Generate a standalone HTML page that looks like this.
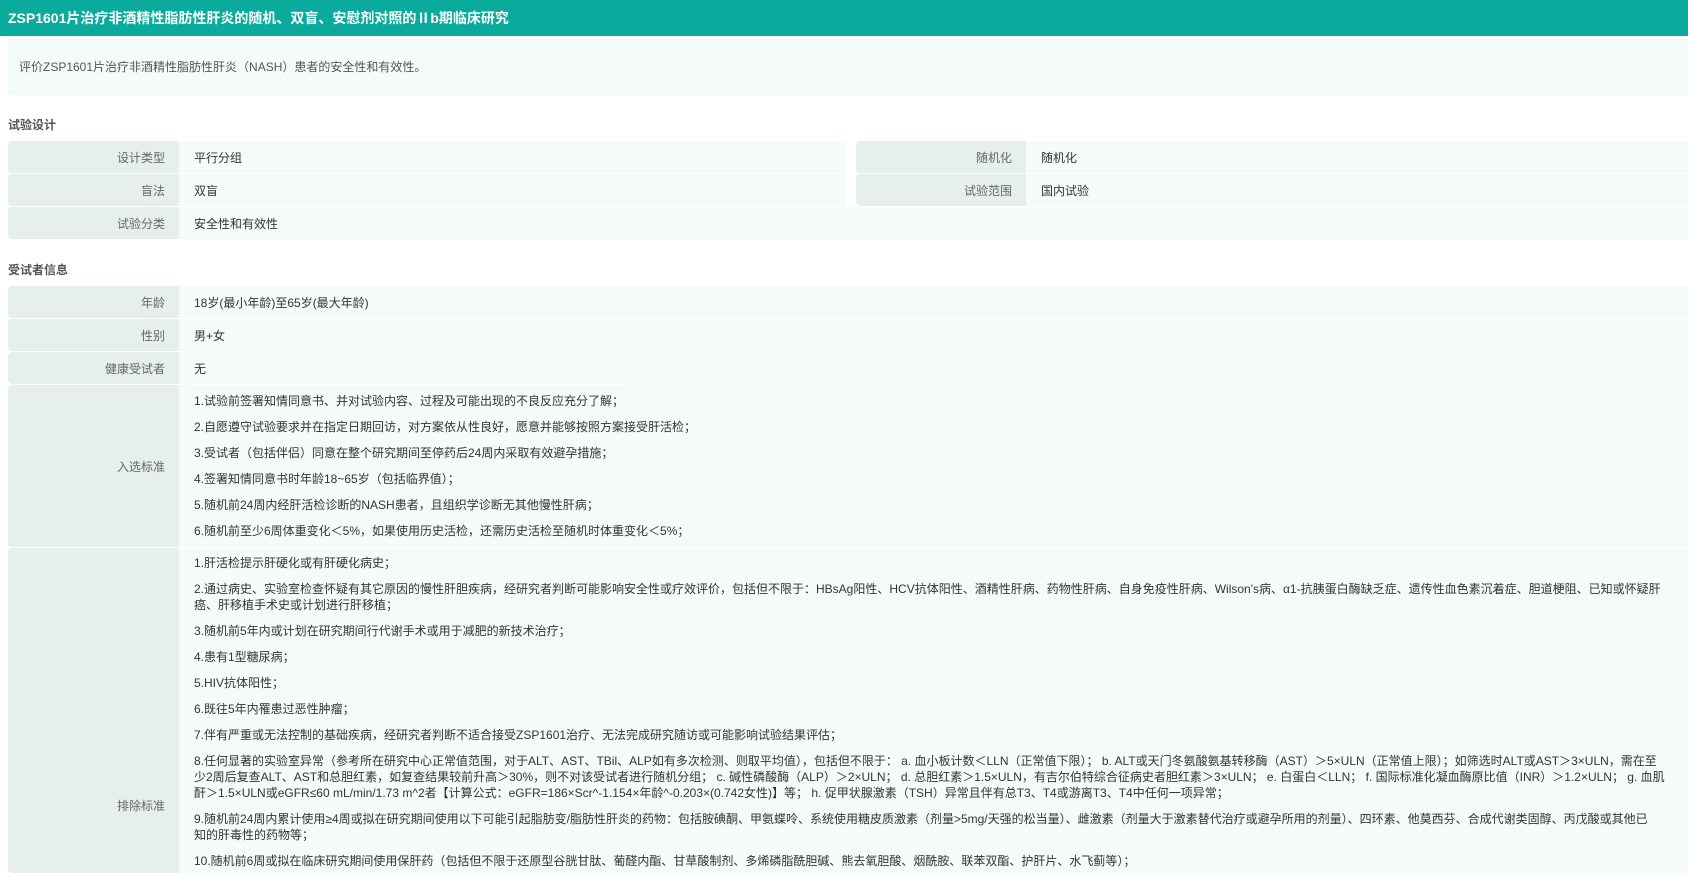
<!DOCTYPE html>
<html><head><meta charset="utf-8">
<style>
*{box-sizing:border-box}
html,body{margin:0;padding:0;background:#fff;width:1688px;height:873px;overflow:hidden;position:relative}
body{font-family:"Liberation Sans","Noto Sans CJK SC",sans-serif;font-size:12px;color:#333}
.hd{height:36px;background:#0aab9d;color:#fff;font-weight:bold;font-size:14px;line-height:36px;padding-left:8px;white-space:nowrap}
.obj{position:absolute;left:8px;right:0;top:39px;height:56px;background:#f5fbfb;color:#555;line-height:56px;padding-left:11px}
.h2{position:absolute;left:8px;font-weight:bold;color:#555;font-size:12px}
.row{position:absolute;display:flex;height:32px}
.lab{background:#e6eeee;color:#666;text-align:right;padding-right:14px;border-radius:4px 0 0 4px;display:flex;align-items:center;justify-content:flex-end}
.val{background:#f5fbfb;color:#333;padding-left:15px;display:flex;align-items:center;flex:1}
.blk{position:absolute;left:8px;right:0;display:flex}
.blk .lab{width:171px}
.blk .val{display:block;padding:3px 0 0 15px;overflow:hidden}
.blk p{margin:0;padding:5px 0;line-height:16px;white-space:nowrap}
</style></head><body>
<div class="hd">ZSP1601片治疗非酒精性脂肪性肝炎的随机、双盲、安慰剂对照的Ⅱb期临床研究</div>
<div class="obj">评价ZSP1601片治疗非酒精性脂肪性肝炎（NASH）患者的安全性和有效性。</div>

<div class="h2" style="top:116px">试验设计</div>
<div class="row" style="left:8px;top:141px;width:838px"><div class="lab" style="width:171px">设计类型</div><div class="val">平行分组</div></div>
<div class="row" style="left:856px;top:141px;width:832px"><div class="lab" style="width:170px">随机化</div><div class="val">随机化</div></div>
<div class="row" style="left:8px;top:174px;width:838px"><div class="lab" style="width:171px">盲法</div><div class="val">双盲</div></div>
<div class="row" style="left:856px;top:174px;width:832px"><div class="lab" style="width:170px">试验范围</div><div class="val">国内试验</div></div>
<div class="row" style="left:8px;top:207px;width:1680px"><div class="lab" style="width:171px">试验分类</div><div class="val">安全性和有效性</div></div>

<div class="h2" style="top:261px">受试者信息</div>
<div class="row" style="left:8px;top:286px;width:1680px"><div class="lab" style="width:171px">年龄</div><div class="val">18岁(最小年龄)至65岁(最大年龄)</div></div>
<div class="row" style="left:8px;top:319px;width:1680px"><div class="lab" style="width:171px">性别</div><div class="val">男+女</div></div>
<div class="row" style="left:8px;top:352px;width:1680px"><div class="lab" style="width:171px">健康受试者</div><div class="val">无</div></div>

<div class="blk" style="top:385px;height:162px"><div class="lab">入选标准</div><div class="val">
<p>1.试验前签署知情同意书、并对试验内容、过程及可能出现的不良反应充分了解；</p>
<p>2.自愿遵守试验要求并在指定日期回访，对方案依从性良好，愿意并能够按照方案接受肝活检；</p>
<p>3.受试者（包括伴侣）同意在整个研究期间至停药后24周内采取有效避孕措施；</p>
<p>4.签署知情同意书时年龄18~65岁（包括临界值）；</p>
<p>5.随机前24周内经肝活检诊断的NASH患者，且组织学诊断无其他慢性肝病；</p>
<p>6.随机前至少6周体重变化＜5%，如果使用历史活检，还需历史活检至随机时体重变化＜5%；</p>
</div></div>

<div class="blk" style="top:548px;height:325px"><div class="lab" style="align-items:flex-start"><span style="position:relative;top:249px">排除标准</span></div><div class="val" style="padding-top:2px">
<p>1.肝活检提示肝硬化或有肝硬化病史；</p>
<p>2.通过病史、实验室检查怀疑有其它原因的慢性肝胆疾病，经研究者判断可能影响安全性或疗效评价，包括但不限于：HBsAg阳性、HCV抗体阳性、酒精性肝病、药物性肝病、自身免疫性肝病、Wilson's病、α1-抗胰蛋白酶缺乏症、遗传性血色素沉着症、胆道梗阻、已知或怀疑肝<br>癌、肝移植手术史或计划进行肝移植；</p>
<p>3.随机前5年内或计划在研究期间行代谢手术或用于减肥的新技术治疗；</p>
<p>4.患有1型糖尿病；</p>
<p>5.HIV抗体阳性；</p>
<p>6.既往5年内罹患过恶性肿瘤；</p>
<p>7.伴有严重或无法控制的基础疾病，经研究者判断不适合接受ZSP1601治疗、无法完成研究随访或可能影响试验结果评估；</p>
<p>8.任何显著的实验室异常（参考所在研究中心正常值范围，对于ALT、AST、TBil、ALP如有多次检测、则取平均值），包括但不限于： a. 血小板计数＜LLN（正常值下限）； b. ALT或天门冬氨酸氨基转移酶（AST）＞5×ULN（正常值上限）；如筛选时ALT或AST＞3×ULN，需在至<br>少2周后复查ALT、AST和总胆红素，如复查结果较前升高＞30%，则不对该受试者进行随机分组； c. 碱性磷酸酶（ALP）＞2×ULN； d. 总胆红素＞1.5×ULN，有吉尔伯特综合征病史者胆红素＞3×ULN； e. 白蛋白＜LLN； f. 国际标准化凝血酶原比值（INR）＞1.2×ULN； g. 血肌<br>酐＞1.5×ULN或eGFR≤60 mL/min/1.73 m^2者【计算公式：eGFR=186×Scr^-1.154×年龄^-0.203×(0.742女性)】等； h. 促甲状腺激素（TSH）异常且伴有总T3、T4或游离T3、T4中任何一项异常；</p>
<p>9.随机前24周内累计使用≥4周或拟在研究期间使用以下可能引起脂肪变/脂肪性肝炎的药物：包括胺碘酮、甲氨蝶呤、系统使用糖皮质激素（剂量&gt;5mg/天强的松当量）、雌激素（剂量大于激素替代治疗或避孕所用的剂量）、四环素、他莫西芬、合成代谢类固醇、丙戊酸或其他已<br>知的肝毒性的药物等；</p>
<p>10.随机前6周或拟在临床研究期间使用保肝药（包括但不限于还原型谷胱甘肽、葡醛内酯、甘草酸制剂、多烯磷脂酰胆碱、熊去氧胆酸、烟酰胺、联苯双酯、护肝片、水飞蓟等）；</p>
</div></div>
</body></html>
